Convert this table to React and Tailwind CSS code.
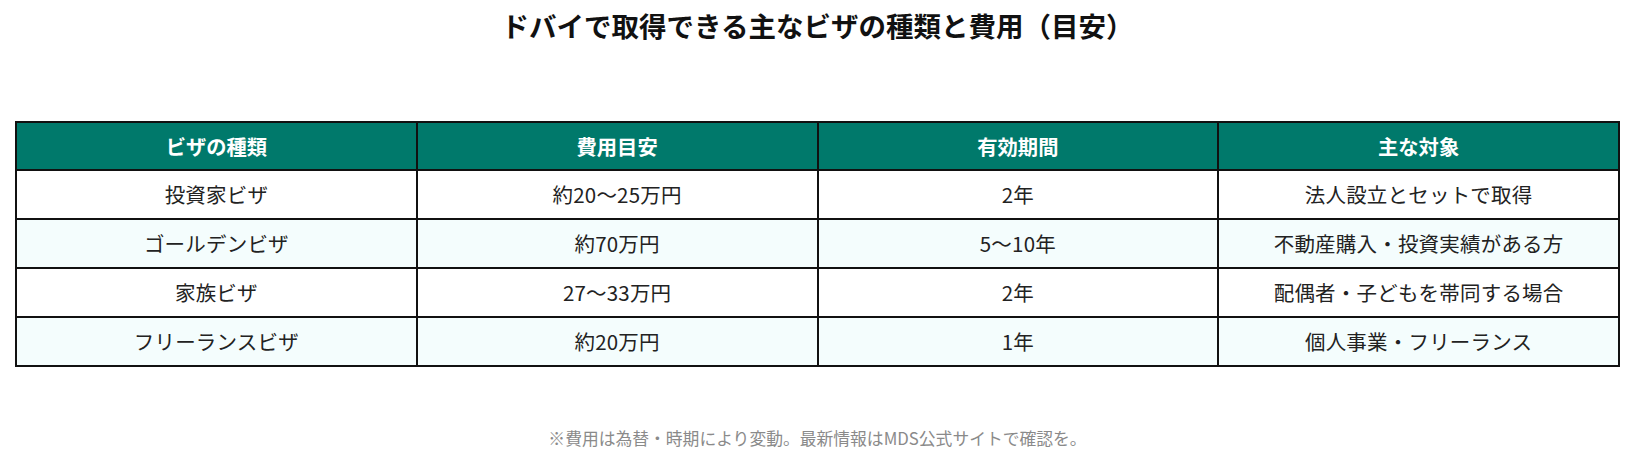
import React from "react";

const rows = [
  ["投資家ビザ", "約20～25万円", "2年", "法人設立とセットで取得"],
  ["ゴールデンビザ", "約70万円", "5～10年", "不動産購入・投資実績がある方"],
  ["家族ビザ", "27～33万円", "2年", "配偶者・子どもを帯同する場合"],
  ["フリーランスビザ", "約20万円", "1年", "個人事業・フリーランス"],
];

const heads = ["ビザの種類", "費用目安", "有効期間", "主な対象"];

export default function App() {
  return (
    <div
      className="w-[1635px] h-[462px] bg-white text-[#222]"
      style={{ fontFamily: '"Noto Sans CJK JP", "Noto Sans", sans-serif' }}
    >
      <h2 className="pt-[6px] text-center text-[27.5px] leading-[38px] font-bold text-[#111]">
        ドバイで取得できる主なビザの種類と費用（目安）
      </h2>
      <div className="mt-[77px] px-[15px]">
        <table className="w-full table-fixed border-collapse">
          <thead>
            <tr>
              {heads.map((h) => (
                <th
                  key={h}
                  className="border-2 border-[#111] bg-[#00796b] py-[11px] text-center text-[20.3px] leading-[24px] font-bold text-white"
                >
                  {h}
                </th>
              ))}
            </tr>
          </thead>
          <tbody>
            {rows.map((r, i) => (
              <tr key={i} className={i % 2 === 1 ? "bg-[#f4fdfd]" : "bg-white"}>
                {r.map((c, j) => (
                  <td
                    key={j}
                    className="border-2 border-[#111] py-[11px] text-center text-[20.5px] leading-[25px] font-normal tracking-[0.2px]"
                  >
                    {c}
                  </td>
                ))}
              </tr>
            ))}
          </tbody>
        </table>
      </div>
      <p className="mt-[59px] text-center text-[16.8px] leading-[24px] text-[#8a8a8a]">
        ※費用は為替・時期により変動。最新情報はMDS公式サイトで確認を。
      </p>
    </div>
  );
}
